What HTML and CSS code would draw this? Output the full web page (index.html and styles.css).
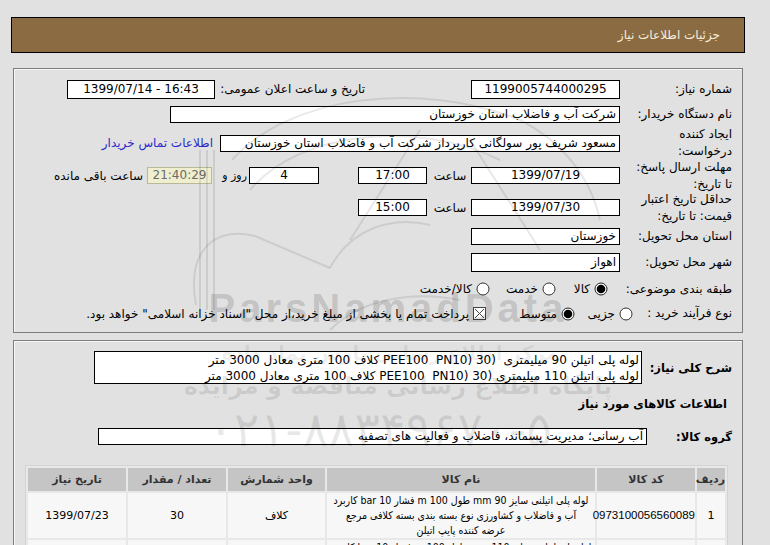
FILE: index.html
```html
<!DOCTYPE html>
<html lang="fa">
<head>
<meta charset="utf-8">
<title>جزئیات اطلاعات نیاز</title>
<link rel="stylesheet" href="styles.css">
</head>
<body>
<div class="page">
  <div class="titlebar">جزئیات اطلاعات نیاز</div>

  <div class="panel p1">
    <div class="row r1">
      <div class="lbl">شماره نیاز:</div>
      <div class="box tall w149 c">1199005744000295</div>
      <div class="lbl2">تاریخ و ساعت اعلان عمومی:</div>
      <div class="box tall w148 c">1399/07/14 - 16:43</div>
    </div>
    <div class="row r2">
      <div class="lbl">نام دستگاه خریدار:</div>
      <div class="box w450">شرکت آب و فاضلاب استان خوزستان</div>
    </div>
    <div class="row r3">
      <div class="lbl">ایجاد کننده<br>درخواست:</div>
      <div class="box w400">مسعود شریف پور سولگانی کارپرداز شرکت آب و فاضلاب استان خوزستان</div>
      <a class="link" href="#">اطلاعات تماس خریدار</a>
    </div>
    <div class="row r4">
      <div class="lbl">مهلت ارسال پاسخ:<br>تا تاریخ:</div>
      <div class="box w149 c">1399/07/19</div>
      <span class="sa">ساعت</span>
      <div class="box w69 c">17:00</div>
      <div class="box w70 c days">4</div>
      <span class="rooz">روز و</span>
      <div class="box w65 c rem">21:40:29</div>
      <span class="baghi">ساعت باقی مانده</span>
    </div>
    <div class="row r5">
      <div class="lbl">حداقل تاریخ اعتبار<br>قیمت: تا تاریخ:</div>
      <div class="box w149 c">1399/07/30</div>
      <span class="sa">ساعت</span>
      <div class="box w69 c">15:00</div>
    </div>
    <div class="row r6">
      <div class="lbl">استان محل تحویل:</div>
      <div class="box w149">خوزستان</div>
    </div>
    <div class="row r7">
      <div class="lbl">شهر محل تحویل:</div>
      <div class="box w149 tall">اهواز</div>
    </div>
    <div class="row r8">
      <div class="lbl">طبقه بندی موضوعی:</div>
      <span class="opt o1"><svg class="rd" viewBox="0 0 14 14"><circle cx="7" cy="7" r="6" fill="#fff" stroke="#222"/><circle cx="7" cy="7" r="4.3" fill="#000"/></svg><span>کالا</span></span>
      <span class="opt o2"><svg class="rd" viewBox="0 0 14 14"><circle cx="7" cy="7" r="6" fill="#fff" stroke="#333"/></svg><span>خدمت</span></span>
      <span class="opt"><svg class="rd" viewBox="0 0 14 14"><circle cx="7" cy="7" r="6" fill="#fff" stroke="#333"/></svg><span>کالا/خدمت</span></span>
    </div>
    <div class="row r9">
      <div class="lbl short">نوع فرآیند خرید :</div>
      <span class="opt o3"><svg class="rd" viewBox="0 0 14 14"><circle cx="7" cy="7" r="6" fill="#fff" stroke="#333"/></svg><span>جزیی</span></span>
      <span class="opt o4"><svg class="rd" viewBox="0 0 14 14"><circle cx="7" cy="7" r="6" fill="#fff" stroke="#222"/><circle cx="7" cy="7" r="4.3" fill="#000"/></svg><span>متوسط</span></span>
      <span class="opt"><svg class="cb" viewBox="0 0 13 13"><rect x="0.5" y="0.5" width="12" height="12" fill="#fff" stroke="#444"/><path d="M2 2 L11 11 M11 2 L2 11" stroke="#444" stroke-width="1"/></svg><span>پرداخت تمام یا بخشی از مبلغ خرید،از محل "اسناد خزانه اسلامی" خواهد بود.</span></span>
    </div>
  </div>

  <div class="panel p2">
    <div class="drow">
      <div class="blbl">شرح کلی نیاز:</div>
      <div class="desc">لوله پلی اتیلن 90 میلیمتری  (30 (PEE100  PN10 کلاف 100 متری معادل 3000 متر
لوله پلی اتیلن 110 میلیمتری (30 (PEE100  PN10 کلاف 100 متری معادل 3000 متر</div>
    </div>
    <div class="sect">اطلاعات کالاهای مورد نیاز</div>
    <div class="grow">
      <div class="blbl g">گروه کالا:</div>
      <div class="box gbox">آب رسانی؛ مدیریت پسماند، فاضلاب و فعالیت های تصفیه</div>
    </div>
    <table class="items">
      <colgroup>
        <col class="c1"><col class="c2"><col class="c3"><col class="c4"><col class="c5"><col class="c6">
      </colgroup>
      <thead>
        <tr><th>ردیف</th><th>کد کالا</th><th>نام کالا</th><th>واحد شمارش</th><th>تعداد / مقدار</th><th>تاریخ نیاز</th></tr>
      </thead>
      <tbody>
        <tr>
          <td>1</td>
          <td class="code">0973100056560089</td>
          <td class="name">لوله پلی اتیلنی سایز 90 mm طول 100 m فشار 10 bar کاربرد<br>آب و فاضلاب و کشاورزی نوع بسته بندی بسته کلافی مرجع<br>عرضه کننده پایپ اتیلن</td>
          <td>کلاف</td>
          <td>30</td>
          <td>1399/07/23</td>
        </tr>
        <tr>
          <td>2</td>
          <td class="code">0973100056560090</td>
          <td class="name">لوله پلی اتیلنی سایز 110 mm طول 100 m فشار 10 bar کاربرد<br>آب و فاضلاب و کشاورزی نوع بسته بندی بسته کلافی مرجع<br>عرضه کننده پایپ اتیلن</td>
          <td>کلاف</td>
          <td>30</td>
          <td>1399/07/23</td>
        </tr>
      </tbody>
    </table>
  </div>

  <svg class="wm" viewBox="0 0 770 545" width="770" height="545">
    <g fill="none" stroke="#000" stroke-opacity="0.09" stroke-width="2">
      <path d="M200 150 V310 M207 150 V310 M214 150 V310"/>
      <path d="M196 305 C186 250 215 226 255 236 L330 268"/>
      <path d="M232 160 C290 95 420 80 520 120 C560 140 590 175 600 220"/>
      <path d="M250 190 C300 130 420 120 500 160"/>
      <path d="M330 268 C350 230 390 215 430 225"/>
      <path d="M420 130 L350 240"/>
      <path d="M470 140 L540 250"/>
      <path d="M330 330 C360 300 410 290 460 300"/>
    </g>
    <text x="388" y="322" text-anchor="middle" font-family="Liberation Sans" font-weight="bold" font-size="40" letter-spacing="4" fill="#000" fill-opacity="0.15">ParsNamadData</text>
    <text x="390" y="360" text-anchor="middle" font-family="DejaVu Sans" font-weight="bold" font-size="20" fill="#000" fill-opacity="0.08" direction="rtl">مرکز اطلاع رسانی پارس نماد داده</text>
    <text x="398" y="394" text-anchor="middle" font-family="DejaVu Sans" font-weight="bold" font-size="24" fill="#000" fill-opacity="0.09" direction="rtl">پایگاه اطلاع رسانی مناقصه و مزایده</text>
    <text x="380" y="446" text-anchor="middle" font-family="DejaVu Sans" font-size="48" fill="#000" fill-opacity="0.09">۰۲۱-۸۸۳۴۹۶۷۰-۵</text>
  </svg>
</div>
</body>
</html>
```

FILE: styles.css
```css
body {
  margin: 0;
  background: #e1e1e1;
  font-family: "DejaVu Sans", Tahoma, sans-serif;
  font-size: 12px;
  color: #000;
}

.page {
  position: relative;
  width: 770px;
  height: 545px;
  overflow: hidden;
  box-sizing: border-box;
  padding: 17px 0 0 11px;
}

.titlebar {
  width: 734px;
  height: 36px;
  box-sizing: border-box;
  border: 1px solid #000;
  background: #8b6c42;
  color: #f6eedd;
  direction: rtl;
  padding-right: 24px;
  line-height: 34px;
  font-size: 12px;
}

.panel {
  width: 730px;
  margin-left: 2px;
  box-sizing: border-box;
  border: 1px solid #7d7d7d;
  box-shadow: inset 1px 1px 0 #f6f6f6;
  direction: rtl;
}

.p1 {
  margin-top: 15px;
  height: 265px;
  padding: 8px 10px 0 0;
}

.p2 {
  margin-top: 7px;
  height: 320px;
  padding-top: 10px;
}

/* form rows */
.row {
  display: flex;
  align-items: center;
}
.r1 { height: 24px; }
.r2 { height: 26px; }
.r3 { height: 32px; }
.r4 { height: 33px; }
.r5 { height: 31px; }
.r6 { height: 26px; }
.r7 { height: 27px; }
.r8 { height: 26px; }
.r9 { height: 23px; }

.lbl {
  width: 112px;
  flex: none;
  text-align: right;
  line-height: 17px;
  white-space: nowrap;
}
.lbl.short { width: 99px; }

.lbl2 {
  width: 150px;
  flex: none;
  margin-right: 106px;
  text-align: right;
  white-space: nowrap;
}

.box {
  flex: none;
  box-sizing: border-box;
  height: 17px;
  border: 1px solid #000;
  background: #fff;
  line-height: 15px;
  padding: 0 3px;
  white-space: nowrap;
  overflow: hidden;
  text-align: right;
}
.box.tall { height: 19px; line-height: 17px; }
.c { text-align: center; direction: ltr; }

.w149 { width: 149px; }
.w148 { width: 148px; }
.w450 { width: 450px; }
.w400 { width: 400px; }
.w69 { width: 69px; }
.w70 { width: 70px; }
.w65 { width: 65px; }

.link {
  margin-right: 7px;
  color: #2a2ac8;
  text-decoration: none;
  white-space: nowrap;
}

.sa {
  width: 36px;
  margin: 0 3px 0 5px;
  text-align: center;
  flex: none;
}
.days { margin-right: 39px; }
.rooz {
  width: 26px;
  margin: 0 2px 0 9px;
  flex: none;
  font-size: 11px;
  text-align: right;
  white-space: nowrap;
}
.rem {
  background: #efefd0;
  border-color: #b9b99a;
  color: #6a6a6a;
}
.baghi {
  margin-right: 4px;
  white-space: nowrap;
}

/* radios */
.opt {
  display: flex;
  align-items: center;
  gap: 4px;
  flex: none;
  white-space: nowrap;
}
.rd { width: 14px; height: 14px; flex: none; }
.cb { width: 13px; height: 13px; flex: none; }
.o1 { width: 52px; margin-right: 12px; }
.o2 { width: 66px; }
.o3 { width: 58px; }
.o4 { width: 89px; }

/* panel 2 */
.drow {
  display: flex;
  align-items: center;
  padding-right: 10px;
}
.blbl {
  width: 90px;
  flex: none;
  text-align: right;
  font-weight: bold;
  font-size: 11.5px;
  white-space: nowrap;
}
.blbl.g { width: 85px; }
.desc {
  width: 548px;
  height: 33px;
  box-sizing: border-box;
  border: 1px solid #000;
  background: #fff;
  padding: 0 2px;
  line-height: 16px;
  font-size: 12px;
  text-align: right;
  white-space: pre;
  overflow: hidden;
}
.sect {
  height: 40px;
  line-height: 40px;
  padding-right: 15px;
  font-weight: bold;
  font-size: 11.5px;
}
.grow {
  display: flex;
  align-items: center;
  margin-top: 4px;
  padding-right: 10px;
}
.gbox { width: 549px; }

.items {
  margin: 20px 14px 0 0;
  width: 701px;
  table-layout: fixed;
  border-collapse: separate;
  border-spacing: 2px;
  background: #e8e8e8;
  border: 1px solid #d4d4d4;
  font-size: 11px;
}
.c1 { width: 28px; }
.c2 { width: 98px; }
.c3 { width: 268px; }
.c4 { width: 97px; }
.c5 { width: 98px; }
.c6 { width: 98px; }

.items th {
  height: 23px;
  padding: 0;
  background: #c5c5c5;
  color: #333;
  font-weight: bold;
  text-align: center;
  font-size: 11px;
}
.items td {
  height: 45px;
  padding: 0 2px;
  background: #f7f7f7;
  text-align: center;
  line-height: 15px;
}
.items td.code {
  padding: 0;
  font-family: "Liberation Sans", "DejaVu Sans", sans-serif;
  font-size: 11.5px;
  white-space: nowrap;
}
.items td.name {
  padding: 0;
  font-family: "DejaVu Sans Condensed", "DejaVu Sans", sans-serif;
  font-stretch: condensed;
  font-size: 10.5px;
  white-space: nowrap;
  overflow: hidden;
}

.wm {
  position: absolute;
  left: 0;
  top: 0;
  pointer-events: none;
}
```
